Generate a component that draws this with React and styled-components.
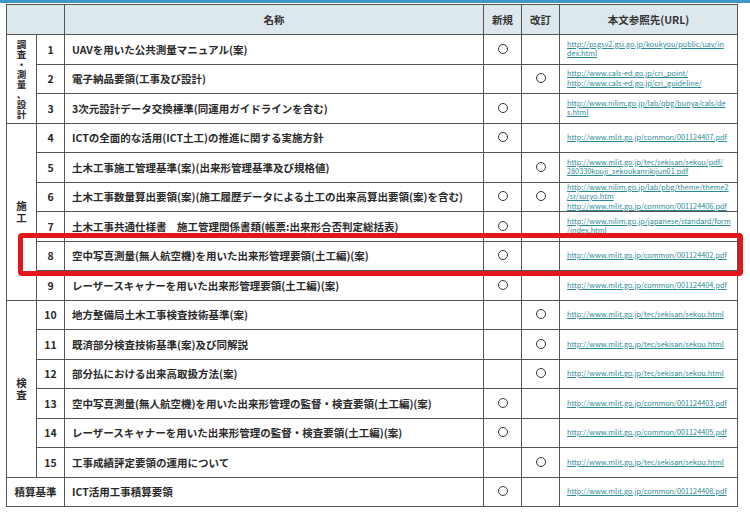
import React from 'react';
import styled, { createGlobalStyle } from 'styled-components';

const Global = createGlobalStyle`
  html, body { margin: 0; padding: 0; background: #ffffff; }
  body { font-family: 'Noto Sans CJK JP', 'Noto Sans', sans-serif; color: #222; }
`;

const Page = styled.div`
  width: 750px;
  height: 512px;
  overflow: hidden;
  background: #fff;
  border-top: 3px solid #3f97c9;
  box-sizing: border-box;
  padding: 1px 0 0 6px;
`;

const Wrap = styled.div`
  position: relative;
  width: 731px;
`;

const Table = styled.table`
  border-collapse: collapse;
  table-layout: fixed;
  width: 731px;
  font-size: 10.5px;
  font-weight: 700;
`;

const Th = styled.th`
  background: #dde8ed;
  border: 1px solid #555;
  height: 29px;
  font-weight: 700;
  font-size: 10.5px;
  color: #333;
  padding: 0;
`;

const Td = styled.td`
  border: 1px solid #555;
  height: 28.5px;
  padding: 0 ${p => (p.$pad ? '7px' : '0')};
  text-align: ${p => (p.$left ? 'left' : 'center')};
  vertical-align: middle;
  color: #2a2a2a;
  white-space: nowrap;
  overflow: hidden;
`;

const Cat = styled.div`
  display: flex;
  flex-direction: column;
  align-items: center;
  line-height: ${p => (p.$tight ? '10px' : '12px')};
  font-size: ${p => (p.$tight ? '9.5px' : '10.5px')};
`;

const Circle = styled.span`
  display: inline-block;
  width: 8px;
  height: 8px;
  border: 1.4px solid #333;
  border-radius: 50%;
`;

const Url = styled.div`
  font-size: 7.3px;
  font-weight: 400;
  line-height: 9.5px;
  color: #2b8a96;
  text-decoration: underline;
  white-space: nowrap;
`;

const Highlight = styled.div`
  position: absolute;
  left: 12px;
  top: 229px;
  width: 715px;
  height: 33px;
  border: 5px solid #e3161c;
  border-radius: 4px;
  pointer-events: none;
`;

const rows = [
  ['1', 'UAVを用いた公共測量マニュアル(案)', 1, 0, ['http://psgsv2.gsi.go.jp/koukyou/public/uav/in', 'dex.html']],
  ['2', '電子納品要領(工事及び設計)', 0, 1, ['http://www.cals-ed.go.jp/cri_point/', 'http://www.cals-ed.go.jp/cri_guideline/']],
  ['3', '3次元設計データ交換標準(同運用ガイドラインを含む)', 1, 0, ['http://www.nilim.go.jp/lab/qbg/bunya/cals/de', 's.html']],
  ['4', 'ICTの全面的な活用(ICT土工)の推進に関する実施方針', 1, 0, ['http://www.mlit.go.jp/common/001124407.pdf']],
  ['5', '土木工事施工管理基準(案)(出来形管理基準及び規格値)', 0, 1, ['http://www.mlit.go.jp/tec/sekisan/sekou/pdf/', '280330kouji_sekoukanrikijun01.pdf']],
  ['6', '土木工事数量算出要領(案)(施工履歴データによる土工の出来高算出要領(案)を含む)', 1, 1, ['http://www.nilim.go.jp/lab/pbg/theme/theme2', '/sr/suryo.htm', 'http://www.mlit.go.jp/common/001124406.pdf']],
  ['7', '土木工事共通仕様書　施工管理関係書類(帳票:出来形合否判定総括表)', 1, 0, ['http://www.nilim.go.jp/japanese/standard/form', '/index.html']],
  ['8', '空中写真測量(無人航空機)を用いた出来形管理要領(土工編)(案)', 1, 0, ['http://www.mlit.go.jp/common/001124402.pdf']],
  ['9', 'レーザースキャナーを用いた出来形管理要領(土工編)(案)', 1, 0, ['http://www.mlit.go.jp/common/001124404.pdf']],
  ['10', '地方整備局土木工事検査技術基準(案)', 0, 1, ['http://www.mlit.go.jp/tec/sekisan/sekou.html']],
  ['11', '既済部分検査技術基準(案)及び同解説', 0, 1, ['http://www.mlit.go.jp/tec/sekisan/sekou.html']],
  ['12', '部分払における出来高取扱方法(案)', 0, 1, ['http://www.mlit.go.jp/tec/sekisan/sekou.html']],
  ['13', '空中写真測量(無人航空機)を用いた出来形管理の監督・検査要領(土工編)(案)', 1, 0, ['http://www.mlit.go.jp/common/001124403.pdf']],
  ['14', 'レーザースキャナーを用いた出来形管理の監督・検査要領(土工編)(案)', 1, 0, ['http://www.mlit.go.jp/common/001124405.pdf']],
  ['15', '工事成績評定要領の運用について', 0, 1, ['http://www.mlit.go.jp/tec/sekisan/sekou.html']],
];

const cats = {
  0: { span: 3, tight: true, chars: ['調', '査', '・', '測', '量', '、', '設', '計'] },
  3: { span: 6, chars: ['施', '工'] },
  9: { span: 6, chars: ['検', '査'] },
};

const Mark = ({ on }) => (on ? <Circle /> : null);

export default function App() {
  return (
    <Page>
      <Global />
      <Wrap>
        <Table>
          <colgroup>
            <col style={{ width: 30 }} />
            <col style={{ width: 28 }} />
            <col style={{ width: 419 }} />
            <col style={{ width: 38 }} />
            <col style={{ width: 38 }} />
            <col style={{ width: 178 }} />
          </colgroup>
          <thead>
            <tr>
              <Th colSpan={2} />
              <Th>名称</Th>
              <Th>新規</Th>
              <Th>改訂</Th>
              <Th>本文参照先(URL)</Th>
            </tr>
          </thead>
          <tbody>
            {rows.map(([n, name, a, b, urls], i) => (
              <tr key={n}>
                {cats[i] && (
                  <Td rowSpan={cats[i].span}>
                    <Cat $tight={cats[i].tight}>{cats[i].chars.map((c, k) => <span key={k}>{c}</span>)}</Cat>
                  </Td>
                )}
                <Td>{n}</Td>
                <Td $left $pad>{name}</Td>
                <Td><Mark on={a} /></Td>
                <Td><Mark on={b} /></Td>
                <Td $left $pad>{urls.map(u => <Url key={u}>{u}</Url>)}</Td>
              </tr>
            ))}
            <tr>
              <Td colSpan={2}>積算基準</Td>
              <Td $left $pad>ICT活用工事積算要領</Td>
              <Td><Circle /></Td>
              <Td />
              <Td $left $pad><Url>http://www.mlit.go.jp/common/001124408.pdf</Url></Td>
            </tr>
          </tbody>
        </Table>
        <Highlight />
      </Wrap>
    </Page>
  );
}
